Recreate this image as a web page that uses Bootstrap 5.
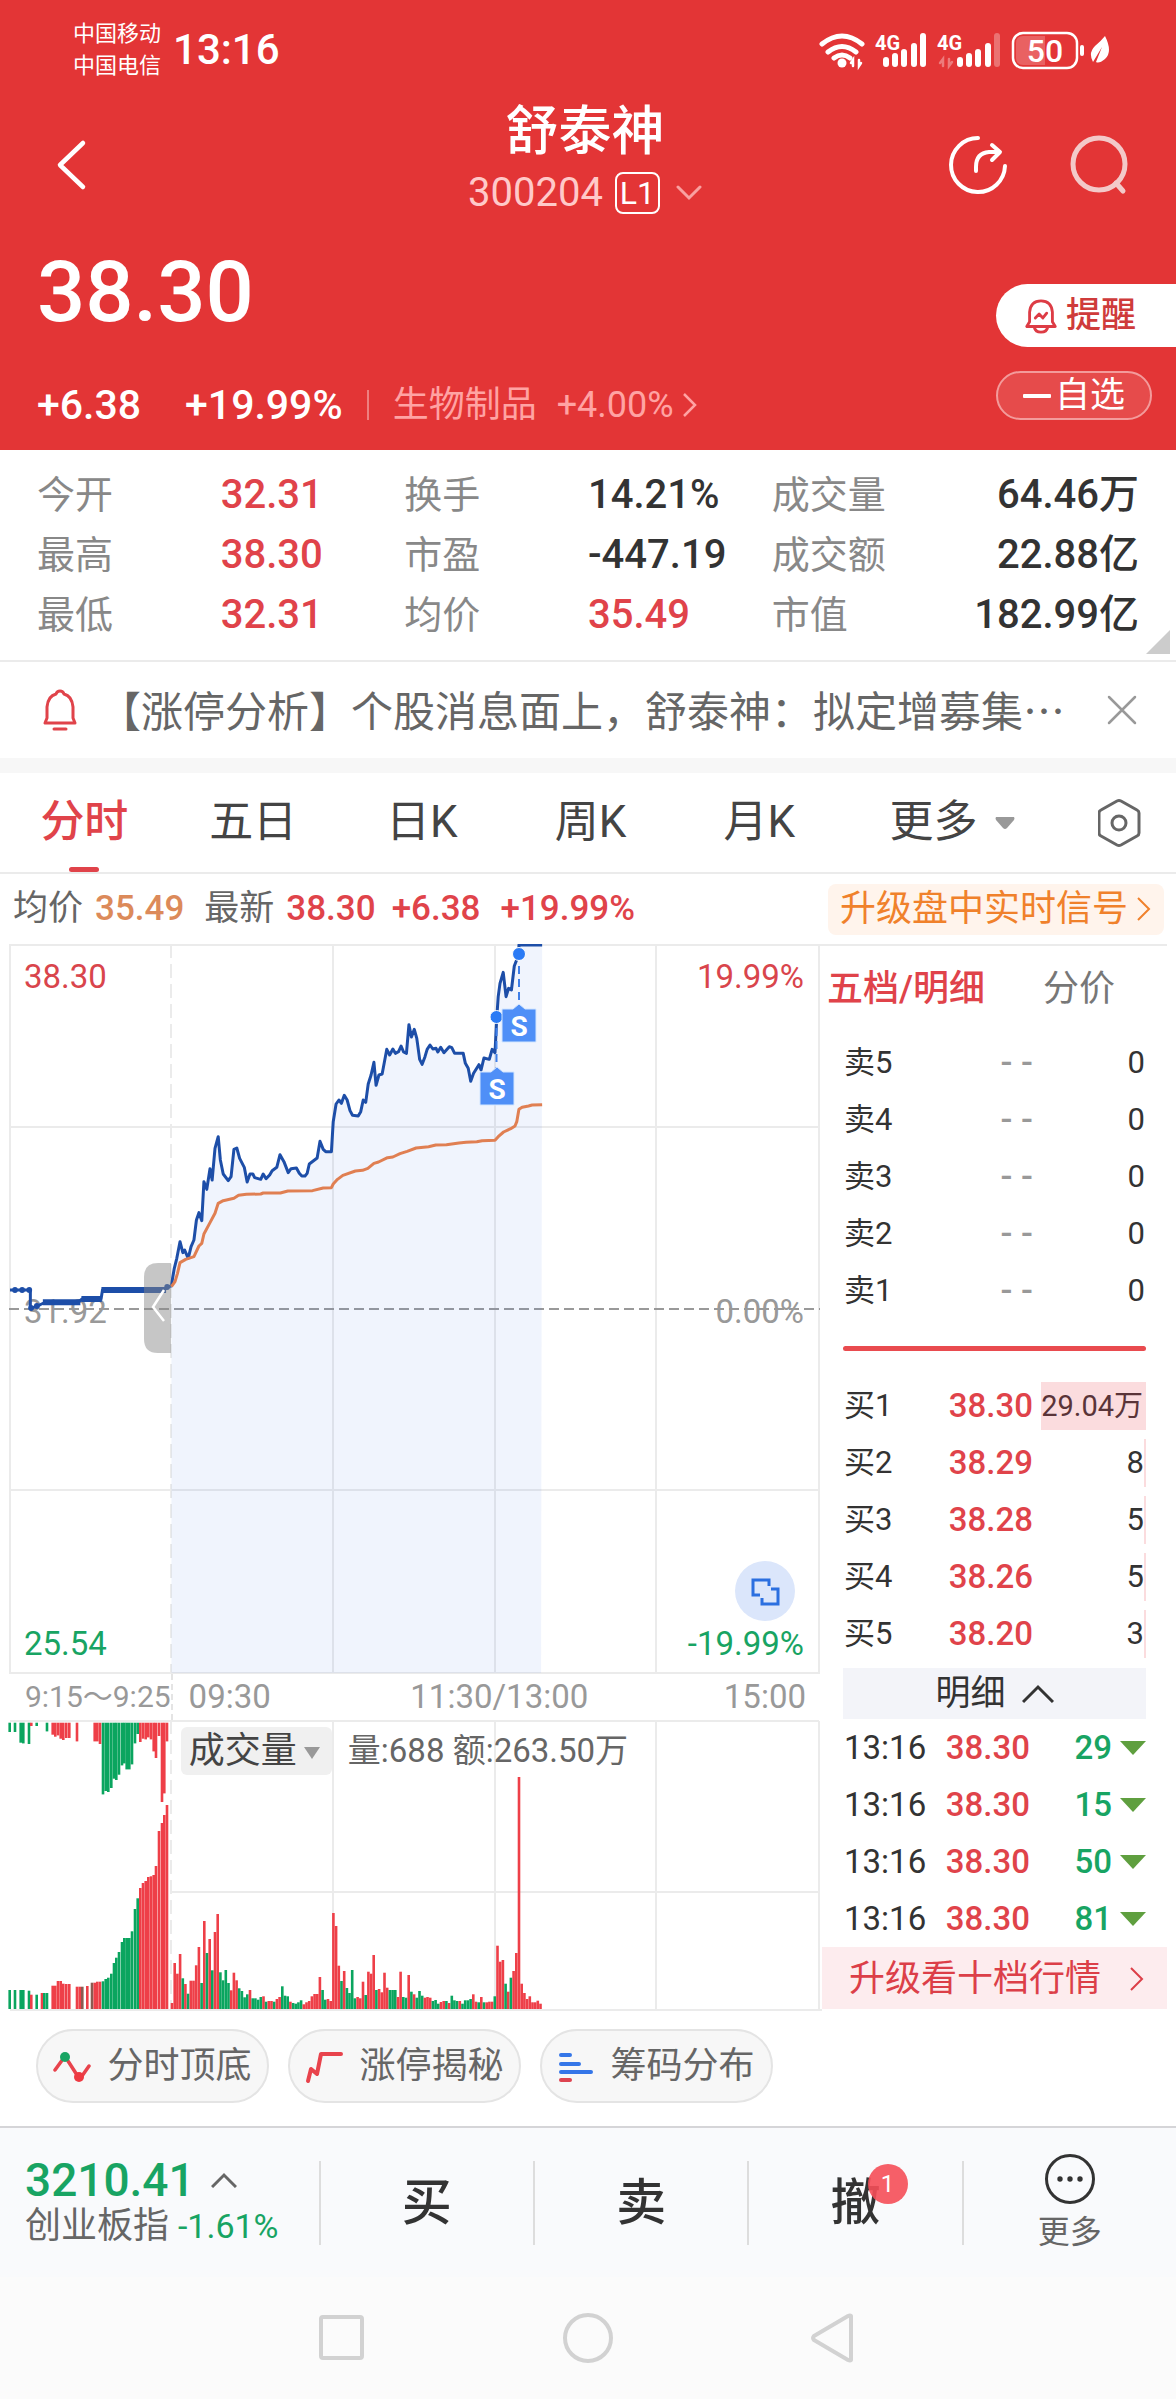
<!DOCTYPE html>
<html lang="zh-CN">
<head>
<meta charset="utf-8">
<meta name="viewport" content="width=device-width, initial-scale=1">
<title>舒泰神 300204</title>
<link href="https://cdn.jsdelivr.net/npm/bootstrap@5.3.0/dist/css/bootstrap.min.css" rel="stylesheet">
<style>
  :root { --up: #e0434a; --down: #18a463; --ink: #333; --dim: #888; --line: #ebebeb; }
  body { font-family: Roboto, "Noto Sans CJK SC", sans-serif; color: var(--ink); background: #fff; font-size: 36px; line-height: 1.2; }
  button, select { font-family: inherit; color: inherit; background: none; border: 0; padding: 0; }
  a { color: inherit; text-decoration: none; }
  svg { display: block; flex: none; }
  svg text { font-family: Roboto, "Noto Sans CJK SC", sans-serif; }
  .up { color: var(--up); }
  .down { color: var(--down); }
  .med { font-weight: 500; }

  .top-area { background: #e33536; color: #fff; }
  .status-bar { height: 100px; padding: 0 64px 0 73px; }
  .carrier { font-size: 22px; line-height: 32px; }
  .clock { font-size: 42px; margin-left: 12px; }
  .title-bar { height: 130px; padding: 0 48px 0 56px; }
  .side-slot { width: 182px; }
  .side-slot.start { width: 168px; }
  .stock-name { font-size: 53px; line-height: 56px; font-weight: 500; margin: 0; }
  .stock-code { font-size: 40px; line-height: 66px; color: #ffc9c9; }
  .level-tag { border: 2px solid #fff; border-radius: 8px; color: #fff; font-size: 32px; line-height: 38px; width: 45px; }
  .quote { padding-left: 37px; }
  .big-price { font-size: 85px; line-height: 124px; font-weight: 500; }
  .change-row { font-size: 41px; line-height: 90px; margin-top: 6px; }
  .change-row .gap { margin-right: 44px; }
  .sector { color: #ffa3a3; font-size: 36px; border-left: 2px solid #ee8080; line-height: 30px; padding-left: 24px; }
  .quote-side { padding-top: 54px; }
  .remind { background: #fff; color: #cf3b3b; border-radius: 32px 0 0 32px; width: 180px; height: 63px; font-size: 35px; font-weight: 500; padding-left: 28px; }
  .favor { border: 2px solid #f39b9b; background: #e64b4b; border-radius: 25px; width: 156px; height: 49px; font-size: 35px; margin-top: 24px; color: #fff; }

  .stats { padding: 15px 37px; font-size: 38px; line-height: 60px; border-bottom: 2px solid var(--line); }
  .stats .name { color: var(--dim); }
  .stats .med { font-size: 40px; }
  .corner { right: 6px; bottom: 6px; }
  .news { height: 96px; padding: 0 39px 0 43px; }
  .news-text { font-family: "Noto Sans CJK SC", sans-serif; font-size: 42px; line-height: 50px; color: #666; padding: 0 0 3px 22px; }
  .band { height: 15px; background: #f7f7f7; }
  .period { border-bottom: 2px solid var(--line); font-size: 44px; height: 101px; }
  .period button { flex: 0 0 14.35%; position: relative; color: #444; }
  .period .wide { flex-basis: 18.5%; }
  .period .on { color: var(--up); font-weight: 500; }
  .period .on::after { content: ""; position: absolute; left: 50%; bottom: 0; width: 30px; height: 5px; margin-left: -15px; border-radius: 3px; background: var(--up); }

  .info { height: 70px; padding: 0 12px 0 13px; font-size: 35px; color: #666; }
  .signal { background: #fff4ec; color: #f0812b; border-radius: 8px; width: 336px; height: 51px; line-height: 51px; font-size: 36px; padding: 0 12px; }

  .chart-col { flex: 1 1 0; min-width: 0; }
  .axis { height: 46px; font-size: 33px; color: #999; }
  .axis .pre { width: 21%; font-size: 30px; border-right: 2px dashed #e4e4e4; }
  .vol-head { left: 22%; top: 7px; font-size: 33px; color: #666; }
  .vol-kind { background: #f0f0f0; border-radius: 6px; height: 48px; width: 151px; }
  .vol-kind select { appearance: none; font-size: 36px; color: #444; line-height: 48px; width: 151px; padding-left: 8px; }
  .vol-kind svg { right: 12px; top: 20px; pointer-events: none; }

  .book { width: 354px; padding-right: 9px; }
  .book-in { padding: 0 21px; }
  .book-tabs { height: 90px; font-size: 36px; border-top: 2px solid var(--line); padding: 0 52px 0 5px; color: #777; }
  .book table { width: 100%; table-layout: fixed; }
  .book td, .book th { padding: 0; height: 57px; line-height: 48px; vertical-align: middle; font-weight: 400; font-size: 31px; }
  .book td { text-align: right; }
  .book th { padding-left: 1px; text-align: left; white-space: nowrap; }
  .book td.px { font-size: 33px; font-weight: 500; }
  .book td.none { color: #999; font-size: 35px; font-weight: 500; }
  .book .qty { border-right: 2px solid #fbdcde; margin-left: 8px; display: block; }
  .book .full { background: #fbdcde; font-size: 29px; color: #5a3438; padding-right: 1px; white-space: nowrap; }
  .book .plain { padding-right: 1px; display: block; }
  .book .ticks th, .book .ticks td { font-size: 33px; }
  .book .ticks td { font-weight: 500; }
  .bar-ratio { height: 5px; border-radius: 3px; background: #e94b4f; margin: 27px 0 26px; }
  .fold { background: #f3f4f9; height: 51px; font-size: 35px; margin-top: 6px; width: 100%; }
  .ten { background: #fdecee; height: 62px; font-size: 36px; line-height: 62px; color: #dc3f48; padding: 2px 22px 0 27px; }

  .chips { padding: 17px 36px 23px; gap: 19px; }
  .chips button { height: 74px; width: 233px; border: 2px solid #e4e4e4; border-radius: 37px; background: #f7f7f7; font-size: 36px; color: #666; padding-top: 2px; }
  .trade { border-top: 2px solid #d5d5d8; background: #f9fafc; height: 151px; }
  .trade .idx { width: 27.1%; padding: 0 0 0 25px; }
  .idx-num { font-size: 46px; line-height: 46px; font-weight: 500; }
  .idx-sub { font-size: 36px; line-height: 46px; color: #666; }
  .idx-sub .down { font-size: 34px; }
  .trade .act { flex: 1 1 0; height: 84px; border-left: 2px solid #ddd; font-size: 50px; font-weight: 500; }
  .trade .more { font-size: 32px; color: #666; font-weight: 400; }
  .count { left: 37px; top: -10px; width: 40px; height: 40px; border-radius: 20px; background: rgba(245,78,88,.9); color: #fff; font-size: 24px; line-height: 40px; font-weight: 400; }
  .sysnav { background: #fbfbfb; height: 122px; padding: 0 318px; }
</style>
</head>
<body>
<header class="top-area">
  <div class="status-bar d-flex align-items-center">
    <div class="carrier">中国移动<br>中国电信</div>
    <div class="clock med">13:16</div>
    <svg class="ms-auto" width="296" height="42" viewBox="816 28 296 42" fill="none" stroke="#fff" stroke-linecap="round" aria-label="信号和电量">
      <g stroke-width="5"><path d="M822 43q20-16 40 0M828 51q14-11 28 0M834 57q8-6 16 0"/></g>
      <circle cx="842" cy="62" r="4.500" fill="#fff" stroke="none"/>
      <path d="M853 65v-6l-2 3M859 59v6l2-3" stroke-width="2.500"/>
      <g stroke-width="6"><path d="M886 63v-4M895 63v-8M904 63v-12M914 63V45M923 63V35"/><path d="M960 63v-4M969 63v-8M978 63v-12M988 63V45"/><path d="M997 63V35" opacity=".3"/></g>
      <path d="M943 65v-7l-3 4M949 58v7l3-4" stroke-width="2.500" opacity=".35"/>
      <g fill="#fff" stroke="none" font-weight="700" font-size="20"><text x="875" y="49">4G</text><text x="937" y="49">4G</text></g>
      <rect x="1013" y="32" width="64" height="35" rx="10" stroke-width="2.500"/>
      <path d="M1023 35h22v29h-22q-7 0-7-7V42q0-7 7-7z" fill="#fff" opacity=".22" stroke="none"/>
      <text x="1045" y="61" text-anchor="middle" font-size="32" font-weight="500" fill="#fff" stroke="none">50</text>
      <path d="M1082 46v7" stroke-width="4"/>
      <path d="M1105 35q8 16 0 23-6 5-9 3l6-15-9 15q-5-9 2-16 6-5 10-10z" fill="#fff" stroke="none"/>
    </svg>
  </div>
  <div class="title-bar d-flex align-items-center justify-content-between">
    <div class="side-slot start d-flex"><button type="button" aria-label="返回"><svg width="32" height="52" viewBox="0 0 32 52" fill="none" stroke="#fff" stroke-width="4.500" stroke-linecap="round" stroke-linejoin="round"><path d="M27 4 4 26l23 22"/></svg></button></div>
    <div class="text-center">
      <h1 class="stock-name">舒泰神</h1>
      <div class="stock-code d-flex align-items-center justify-content-center gap-2"><span>300204</span><span class="level-tag ms-1">L1</span>
        <svg class="ms-2" width="26" height="16" viewBox="0 0 26 16" fill="none" stroke="#f9a0a0" stroke-width="3" stroke-linecap="round"><path d="m2 2 11 11L24 2"/></svg></div>
    </div>
    <div class="side-slot d-flex justify-content-between">
      <button type="button" aria-label="分享"><svg width="62" height="62" viewBox="0 0 62 62" fill="none" stroke="#fff" stroke-width="4" stroke-linecap="round" stroke-linejoin="round"><path d="M32 4A27 27 0 1 0 59 32"/><path d="M30 37v-4q0-14 13-15h10M46 11l8 7-8 8"/></svg></button>
      <button type="button" aria-label="搜索"><svg width="60" height="62" viewBox="0 0 60 62" fill="none" stroke="#f3c9c9" stroke-width="5" stroke-linecap="round"><circle cx="31" cy="30" r="26"/><path d="m48 49 7 8"/></svg></button>
    </div>
  </div>
  <div class="quote d-flex justify-content-between">
    <div>
      <div class="big-price">38.30</div>
      <div class="change-row d-flex align-items-center med"><span class="gap">+6.38</span><span>+19.99%</span>
        <a href="#" class="sector fw-normal d-flex align-items-center ms-4">生物制品<span class="ms-3 ps-1">+4.00%</span>
          <svg class="ms-2" width="16" height="26" viewBox="0 0 16 26" fill="none" stroke="#ffa3a3" stroke-width="2.500"><path d="m2 2 11 11L2 24"/></svg></a></div>
    </div>
    <div class="quote-side">
      <button type="button" class="remind d-flex align-items-center gap-2"><svg width="34" height="38" viewBox="0 0 34 40" fill="none" stroke="#dd3c45" stroke-width="3" stroke-linejoin="round" stroke-linecap="round"><path d="M2 31h30l-3-5V16q-1-12-12-12T5 16v10zM10 32q1 5 7 5t7-5"/><path d="m11 22 4-4 4 4 4-5"/></svg>提醒</button>
      <button type="button" class="favor d-flex align-items-center justify-content-center gap-1"><svg width="28" height="4" viewBox="0 0 28 4"><rect width="28" height="4" rx="1" fill="#fff"/></svg>自选</button>
    </div>
  </div>
</header>

<main>
  <section class="stats position-relative">
    <div class="row g-0">
      <div class="col-4 d-flex"><span class="name w-50">今开</span><span class="up med">32.31</span></div>
      <div class="col-4 d-flex"><span class="name w-50">换手</span><span class="med">14.21%</span></div>
      <div class="col-4 d-flex justify-content-between"><span class="name">成交量</span><span class="med">64.46万</span></div>
      <div class="col-4 d-flex"><span class="name w-50">最高</span><span class="up med">38.30</span></div>
      <div class="col-4 d-flex"><span class="name w-50">市盈</span><span class="med">-447.19</span></div>
      <div class="col-4 d-flex justify-content-between"><span class="name">成交额</span><span class="med">22.88亿</span></div>
      <div class="col-4 d-flex"><span class="name w-50">最低</span><span class="up med">32.31</span></div>
      <div class="col-4 d-flex"><span class="name w-50">均价</span><span class="up med">35.49</span></div>
      <div class="col-4 d-flex justify-content-between"><span class="name">市值</span><span class="med">182.99亿</span></div>
    </div>
    <svg class="corner position-absolute" width="24" height="24" viewBox="0 0 24 24"><path d="M24 0v24H0z" fill="#ccc"/></svg>
  </section>

  <section class="news d-flex align-items-center">
    <svg width="34" height="42" viewBox="0 0 34 42" fill="none" stroke="#e0434a" stroke-width="3" stroke-linejoin="round" stroke-linecap="round"><path d="M2 34h30l-2-5V18Q29 7 21 5q-1-3-4-3t-4 3Q5 7 4 18v11z"/><path d="M11 40h12"/></svg>
    <a href="#" class="news-text text-nowrap">【涨停分析】个股消息面上，舒泰神：拟定增募集…</a>
    <button type="button" class="ms-auto" aria-label="关闭"><svg width="30" height="30" viewBox="0 0 30 30" stroke="#999" stroke-width="2.500" stroke-linecap="round"><path d="m2 2 26 26M28 2 2 28"/></svg></button>
  </section>
  <div class="band"></div>

  <nav class="period d-flex">
    <button type="button" class="on">分时</button><button type="button">五日</button><button type="button">日K</button><button type="button">周K</button><button type="button">月K</button>
    <button type="button" class="wide d-flex align-items-center justify-content-center gap-3">更多<svg width="22" height="14" viewBox="0 0 22 14"><path d="M2 1h18q1 1 0 3l-7 8q-2 2-4 0L2 4Q1 2 2 1z" fill="#999"/></svg></button>
    <button type="button" class="flex-fill d-flex align-items-center justify-content-end pe-4" aria-label="设置"><svg class="me-2" width="46" height="50" viewBox="0 0 46 50" fill="none" stroke="#666" stroke-width="3" stroke-linejoin="round"><path d="M19 3q2-1 4 0l16 9q2 1 2 3v20q0 2-2 3l-16 9q-2 1-4 0L3 38q-2-1-2-3V15q0-2 2-3z"/><circle cx="21" cy="25" r="7"/></svg></button>
  </nav>

  <div class="info d-flex align-items-center text-nowrap">
    <span class="me-2 pe-1">均价</span><span class="med me-3" style="color:#dc8a5a">35.49</span><span class="ms-1 me-2 pe-1">最新</span><span class="up med me-3">38.30</span><span class="up med me-3">+6.38</span><span class="up med ms-1">+19.99%</span>
    <a href="#" class="signal d-flex align-items-center justify-content-between ms-auto">升级盘中实时信号<svg width="16" height="26" viewBox="0 0 16 26" fill="none" stroke="#f0812b" stroke-width="2"><path d="m2 2 11 11L2 24"/></svg></a>
  </div>

  <div class="d-flex align-items-start">
    <div class="chart-col">
      <svg class="w-100 h-auto" viewBox="0 944 822 730" fill="none" role="img" aria-label="分时走势">
        <g stroke="#ebebeb" stroke-width="2"><path d="M10 945H822M10 1127H819M10 1490H819M10 1673H819M10 944V1674M333 944V1674M495 944V1674M656 944V1674M819 944V1674"/><path d="M171 944V1674" stroke-dasharray="14 6"/></g>
        <g font-size="33" fill="#999"><text x="24" y="1323">31.92</text><text x="804" y="1323" text-anchor="end">0.00%</text></g>
        <path d="M9 1309H820" stroke="#999" stroke-width="2" stroke-dasharray="10 5"/>
        <g id="price" transform="translate(0 930) scale(.357143 .333333)" stroke-linejoin="round"></g>
        <path d="M519 966v36M496.500 1028v44" stroke="#3f7fe8" stroke-width="2" stroke-dasharray="8 5"/>
        <g fill="#2b7bf5" stroke="#fff" stroke-width="1"><circle cx="519" cy="954" r="6.500"/><circle cx="496.500" cy="1017" r="6.500"/></g>
        <g fill="#4f8ff7" stroke="#d3e6ff" stroke-width="1"><path d="M502 1009h11l6-5 6 5h11v33h-34zM480 1072h11l6-5 6 5h11v33h-34z"/></g>
        <g fill="#fff" font-size="28" font-weight="700" text-anchor="middle"><text x="519" y="1036">S</text><text x="497" y="1099">S</text></g>
        <g font-size="33"><g fill="#d9454c"><text x="24" y="988">38.30</text><text x="804" y="988" text-anchor="end">19.99%</text></g><g fill="#18a463"><text x="24" y="1655">25.54</text><text x="804" y="1655" text-anchor="end">-19.99%</text></g></g>
        <path d="M171 1263h-13q-14 0-14 14v62q0 14 14 14h13z" fill="#888" fill-opacity=".48"/>
        <path d="m164 1290-11 17 11 14" stroke="#fff" stroke-width="2.500"/>
        <circle cx="765" cy="1591" r="30" fill="#dbe6fb"/>
        <path d="M760 1595h-7v-15h16v6M771 1589h7v15h-16v-6" stroke="#2b6fe0" stroke-width="3"/>
      </svg>
      <div class="axis d-flex align-items-center text-nowrap">
        <span class="pre h-100 d-flex align-items-center justify-content-end">9:15～9:25</span>
        <div class="flex-grow-1 d-flex justify-content-between ps-3 pe-3"><span>09:30</span><span class="ps-1">11:30/13:00</span><span>15:00</span></div>
      </div>
      <div class="position-relative">
        <svg class="w-100 h-auto" viewBox="0 1720 822 292" fill="none" role="img" aria-label="成交量">
          <g stroke="#ebebeb" stroke-width="2"><path d="M10 1721H819M171 1892H819M10 2010H822M333 1721V2010M495 1721V2010M656 1721V2010M819 1721V2010"/><path d="M171 1720V2010" stroke-dasharray="14 6"/></g>
          <g id="bars"></g>
        </svg>
        <div class="vol-head position-absolute d-flex align-items-center text-nowrap">
          <label class="vol-kind position-relative me-3"><select aria-label="副图指标"><option>成交量</option></select><svg class="position-absolute" width="16" height="12" viewBox="0 0 16 12"><path d="M0 0h16L8 12z" fill="#999"/></svg></label>
          <span>量:688 额:263.50万</span>
        </div>
      </div>
    </div>

    <aside class="book">
      <div class="book-tabs d-flex align-items-center justify-content-between text-nowrap"><a href="#" class="up med">五档/明细</a><a href="#">分价</a></div>
      <div class="book-in">
        <table>
          <colgroup><col style="width:60px"><col style="width:130px"><col></colgroup>
          <tr><th>卖5</th><td class="none">- -</td><td><span class="plain">0</span></td></tr>
          <tr><th>卖4</th><td class="none">- -</td><td><span class="plain">0</span></td></tr>
          <tr><th>卖3</th><td class="none">- -</td><td><span class="plain">0</span></td></tr>
          <tr><th>卖2</th><td class="none">- -</td><td><span class="plain">0</span></td></tr>
          <tr><th>卖1</th><td class="none">- -</td><td><span class="plain">0</span></td></tr>
        </table>
        <div class="bar-ratio"></div>
        <table>
          <colgroup><col style="width:60px"><col style="width:130px"><col></colgroup>
          <tr><th>买1</th><td class="px up">38.30</td><td><span class="qty full">29.04万</span></td></tr>
          <tr><th>买2</th><td class="px up">38.29</td><td><span class="qty">8</span></td></tr>
          <tr><th>买3</th><td class="px up">38.28</td><td><span class="qty">5</span></td></tr>
          <tr><th>买4</th><td class="px up">38.26</td><td><span class="qty">5</span></td></tr>
          <tr><th>买5</th><td class="px up">38.20</td><td><span class="qty">3</span></td></tr>
        </table>
        <button type="button" class="fold d-flex align-items-center justify-content-center gap-3">明细<svg width="32" height="20" viewBox="0 0 32 20" fill="none" stroke="#333" stroke-width="3"><path d="M1 18 16 3l15 15"/></svg></button>
        <table class="ticks">
          <colgroup><col style="width:86px"><col style="width:101px"><col><col style="width:34px"></colgroup>
          <tbody id="ticks"></tbody>
        </table>
      </div>
      <a href="#" class="ten d-flex align-items-center justify-content-between">升级看十档行情<svg width="16" height="26" viewBox="0 0 16 26" fill="none" stroke="#dc3f48" stroke-width="2"><path d="m2 2 11 11L2 24"/></svg></a>
    </aside>
  </div>

  <div class="chips d-flex">
    <button type="button" class="d-flex align-items-center justify-content-center gap-3"><svg width="38" height="34" viewBox="0 0 38 34" fill="none" stroke="#e8434c" stroke-width="3.500" stroke-linecap="round"><path d="m2 20 8-11M15 11l9 14M29 26l7-10"/><circle cx="12" cy="7" r="5" fill="#18a463" stroke="none"/><circle cx="26" cy="27" r="5" fill="#ee3a42" stroke="none"/></svg>分时顶底</button>
    <button type="button" class="d-flex align-items-center justify-content-center gap-3"><svg width="38" height="34" viewBox="0 0 38 34" fill="none" stroke="#e8434c" stroke-width="4" stroke-linecap="round" stroke-linejoin="round"><path d="m3 31 3-12 6 5 4-20h20"/></svg>涨停揭秘</button>
    <button type="button" class="d-flex align-items-center justify-content-center gap-3"><svg width="36" height="34" viewBox="0 0 36 34" stroke-width="4" stroke-linecap="round"><path d="M3 5h9M3 14h18M3 22h30" stroke="#3576e8"/><path d="M3 30h9" stroke="#dd4450"/></svg>筹码分布</button>
  </div>
</main>

<footer>
  <div class="trade d-flex align-items-center">
    <a href="#" class="idx text-nowrap">
      <div class="idx-num down d-flex align-items-center">3210.41<svg class="ms-3" width="26" height="16" viewBox="0 0 26 16" fill="none" stroke="#666" stroke-width="3"><path d="m1 15 12-12 12 12"/></svg></div>
      <div class="idx-sub">创业板指 <span class="down">-1.61%</span></div>
    </a>
    <button type="button" class="act">买</button>
    <button type="button" class="act">卖</button>
    <button type="button" class="act"><span class="position-relative">撤<span class="count position-absolute">1</span></span></button>
    <button type="button" class="act more d-flex flex-column align-items-center justify-content-center gap-2"><svg width="52" height="52" viewBox="0 0 52 52" fill="none" stroke="#333" stroke-width="3"><circle cx="26" cy="26" r="23.500"/><g fill="#333" stroke="none"><circle cx="16" cy="26" r="2.700"/><circle cx="26" cy="26" r="2.700"/><circle cx="36" cy="26" r="2.700"/></g></svg>更多</button>
  </div>
  <div class="sysnav d-flex align-items-center justify-content-between">
    <button type="button" aria-label="最近任务"><svg width="48" height="48" viewBox="0 0 48 48" fill="none" stroke="#d2d2d2" stroke-width="4"><rect x="3" y="3" width="41" height="41" rx="2"/></svg></button>
    <button type="button" aria-label="主屏幕"><svg width="52" height="52" viewBox="0 0 52 52" fill="none" stroke="#d2d2d2" stroke-width="4"><circle cx="26" cy="26" r="23"/></svg></button>
    <button type="button" aria-label="返回上一页"><svg width="48" height="52" viewBox="0 0 48 52" fill="none" stroke="#d2d2d2" stroke-width="4" stroke-linejoin="round"><path d="M41 4v44q-1 1-3 0L4 28q-2-2 0-4L38 4q2-1 3 0z"/></svg></button>
  </div>
</footer>

<script src="https://cdn.jsdelivr.net/npm/bootstrap@5.3.0/dist/js/bootstrap.bundle.min.js"></script>
<script>
  // Trend lines: opening auction, session price, session average
  const auction = '28,1080 85,1080 85,1136 105,1128 128,1116 220,1116 230,1107 283,1107 287,1080 460,1080 468,1071 480,1068';
  const session = '480,1065 488,1015 495,985 504,935 512,968 517,960 527,985 535,950 543,930 550,870 557,848 565,872 571,755 579,778 588,716 594,750 602,655 611,620 617,690 625,732 639,752 647,740 655,658 663,654 671,685 684,712 692,756 700,732 708,732 713,743 730,748 737,732 745,746 755,735 762,722 775,712 784,674 795,695 807,728 815,716 830,714 838,730 845,738 854,738 860,730 866,702 888,684 896,634 905,658 912,665 928,665 933,575 941,522 949,510 956,520 964,496 972,510 980,542 987,556 1003,558 1010,545 1017,510 1024,517 1031,462 1039,435 1047,397 1053,466 1061,435 1070,432 1083,358 1091,375 1100,357 1107,370 1116,365 1123,348 1130,366 1138,370 1145,284 1152,321 1160,298 1167,325 1175,388 1182,403 1190,380 1196,358 1204,345 1212,357 1221,355 1226,366 1234,352 1243,368 1258,350 1265,353 1273,370 1297,370 1303,400 1311,415 1318,454 1326,430 1341,404 1347,420 1355,384 1370,388 1378,358 1386,368 1391,262 1395,200 1400,160 1409,127 1417,200 1424,175 1432,180 1440,108 1453,72 1453,45 1518,45';
  const average = '480,1070 490,1055 497,1030 504,998 520,988 543,980 557,948 565,940 571,912 588,878 602,850 611,820 625,812 655,805 668,796 690,793 730,792 737,789 785,789 806,783 875,782 905,774 928,773 933,762 945,748 960,736 995,723 1015,721 1030,715 1047,700 1060,696 1085,683 1100,681 1120,671 1140,664 1165,654 1200,650 1220,645 1250,644 1285,639 1305,637 1335,635 1350,632 1386,631 1395,620 1410,606 1430,596 1442,588 1447,575 1453,538 1462,532 1480,528 1490,525 1518,524';
  const line = (pts, color, w) => `<polyline points="${pts}" stroke="${color}" stroke-width="${w}" vector-effect="non-scaling-stroke"/>`;
  const dot = (x, y) => `<ellipse cx="${x}" cy="${y}" rx="8" ry="9" fill="#1d4ea8"/>`;
  document.getElementById('price').innerHTML =
    `<polygon points="${session} 1515,2229 480,2229" fill="#3a78e8" fill-opacity=".08"/>` +
    line(auction, '#1d4ea8', 3) + line('120,1117 225,1117', '#1d4ea8', 6) + line('228,1107 285,1107', '#1d4ea8', 6) + line('284,1080 465,1080', '#1d4ea8', 6) +
    dot(42, 1080) + dot(62, 1080) + dot(82, 1080) + dot(87, 1134) + dot(103, 1128) + dot(468, 1071) +
    line(session, '#1d4ea8', 3) + line(average, '#e07f52', 3);

  // Volume bars: g = down, r = up
  const red = '#ee3f48', green = '#0aa55f';
  let out = '';
  const bar = (x, y, h, c) => { out += `<rect x="${(x - 1.3).toFixed(1)}" y="${y.toFixed(1)}" width="2.600" height="${h.toFixed(1)}" fill="${c === 'g' ? green : c === 'b' ? '#8c5a50' : red}"/>`; };
  const parse = s => s.split(' ').map(t => { const [a, b] = t.split(':'); return [+a, parseInt(b), b.slice(-1)]; });
  parse('29:28g 45:28g 62:60g 70:62g 87:64g 94:10r 110:10g 141:26g 158:36r 166:42r 174:38r 182:48r 190:52r 199:46r 208:46r 231:56r 284:56r 292:56r 300:64r 309:215g 317:205g 325:208g 334:196g 342:168g 349:172g 357:156g 366:128g 373:122g 380:140g 388:140g 396:125g 405:62g 413:34g 421:58r 429:48r 437:50r 445:44r 453:50r 461:86r 468:106r 477:40r 486:238r 493:212r 501:56r')
    .forEach(([x, h, c]) => bar(x / 3, 1722.7, h / 3, c));
  parse('29:57g 45:57g 62:57g 70:57g 87:55g 94:43r 110:43g 126:48r 133:48g 141:48g 158:70r 166:70r 174:84r 182:84r 190:76r 199:75r 208:75r 231:67r 239:67r 247:67b 262:69r 276:79b 284:79r 292:82r 300:82r 309:83g 317:90g 325:94g 334:106g 342:138g 349:154g 357:171g 366:201g 373:213g 380:213g 388:213g 396:233g 405:300g 413:332g 421:363r 429:378r 437:384r 445:396r 453:398r 461:402r 468:429r 477:534r 486:558r 493:582r 501:612r')
    .forEach(([x, h, c]) => bar(x / 3, 2009 - h / 3, h / 3, c));
  ('18r 138r 106r 165r 92g 75r 46g 85r 85r 131r 186r 78g 264r 168g 210r 116g 231r 285r 110g 86g 117g 78g 56r 109r 86r 62g 54g 35g 44g 57r 32g 32g 28g 36g 38r 22g 24r 24r 22g 30r 36r 68g 40g 38g 22r 18g 16g 20g 26g 14r 20r 24r 38r 45r 45r 96r 57g 28g 30r 24r ' +
   '288r 249r 130r 84g 114r 63g 48g 117g 32g 36r 32r 82r 42g 112r 106r 162r 57g 60r 50r 109r 64r 57g 57g 57g 36r 112r 36g 34g 102r 52g 44r 34g 54g 40g 34r 36r 34r 24g 27g 16g 21r 24r 24g 18r 40g 26g 24g 24r 16g 26g 26g 30g 44r 22r 20g 36r 20g 20r 22r 22r 38g ' +
   '190r 142r 147r 76g 52r 94g 114r 168r 696r 76r 48r 30r 38r 20r 20r 25r 16r')
    .split(' ').forEach((t, i) => { const h = parseInt(t) / 3; bar(172 + i * 2.69, 2009 - h, h, t.slice(-1)); });
  document.getElementById('bars').innerHTML = out;

  // Latest trades
  document.getElementById('ticks').innerHTML = [29, 15, 50, 81].map(q =>
    `<tr><th>13:16</th><td class="px up">38.30</td><td class="down">${q}</td><td><svg class="ms-auto" width="26" height="14" viewBox="0 0 26 14"><path d="M0 0h26L13 14z" fill="#5f9f3f"/></svg></td></tr>`).join('');
</script>
</body>
</html>
